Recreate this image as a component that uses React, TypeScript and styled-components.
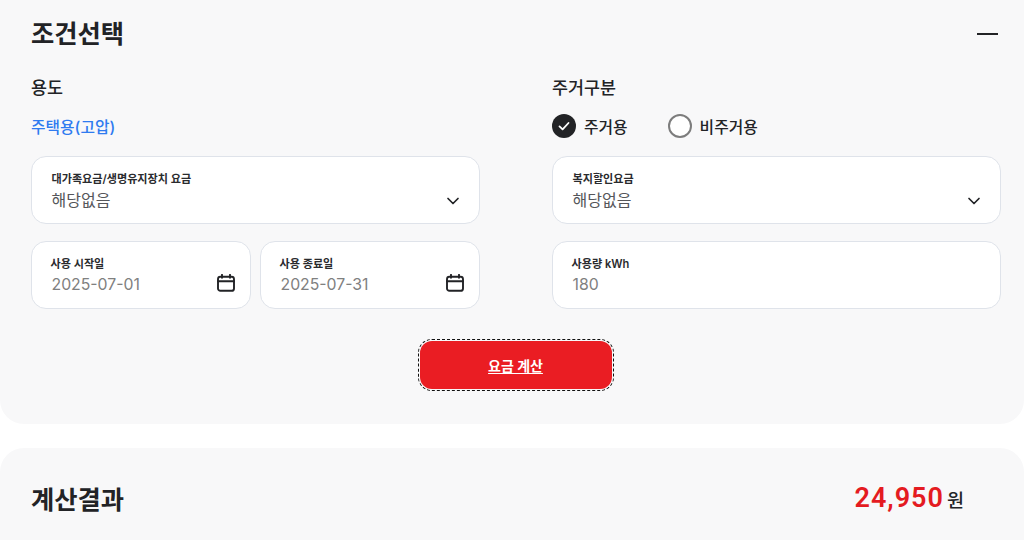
import React from 'react';
import styled, { createGlobalStyle } from 'styled-components';

const GlobalStyle = createGlobalStyle`
  html, body {
    margin: 0;
    padding: 0;
    background: #fff;
    overflow: hidden;
  }
  body {
    font-family: Inter, "Noto Sans CJK KR", sans-serif;
    color: #222326;
  }
`;

const Page = styled.div`
  width: 1024px;
  height: 540px;
  overflow: hidden;
`;

const ConditionPanel = styled.section`
  background: #f8f8f9;
  height: 424px;
  box-sizing: border-box;
  padding: 16px 24px 0 31px;
  border-radius: 0 0 24px 24px;
`;

const PanelHead = styled.div`
  display: flex;
  align-items: center;
  justify-content: space-between;
  height: 36px;
`;

const PanelTitle = styled.h2`
  margin: 0;
  font-size: 25.3px;
  line-height: 36px;
  font-weight: 700;
  color: #222326;
`;

const CollapseBar = styled.span`
  display: block;
  width: 21px;
  height: 2px;
  margin-right: 2px;
  background: #222326;
`;

const Columns = styled.div`
  display: grid;
  grid-template-columns: 449px 449px;
  column-gap: 72px;
  margin-top: 24px;
`;

const Column = styled.div`
  display: flex;
  flex-direction: column;
`;

const GroupLabel = styled.div`
  font-size: 17.4px;
  line-height: 24px;
  font-weight: 500;
  color: #222326;
`;

const ValueRow = styled.div`
  display: flex;
  align-items: center;
  height: 28px;
  margin: 12px 0 16px;
`;

const UsageLink = styled.span`
  font-size: 15.8px;
  font-weight: 500;
  color: #2f7bf0;
`;

const RadioOption = styled.label`
  display: flex;
  align-items: center;
  gap: 8px;
  margin-right: 40px;
  font-size: 15.8px;
  font-weight: 500;
  color: #222326;
`;

const RadioMark = styled.span<{ $checked?: boolean }>`
  box-sizing: border-box;
  width: 24px;
  height: 24px;
  border-radius: 50%;
  display: flex;
  align-items: center;
  justify-content: center;
  background: ${(p) => (p.$checked ? '#222326' : '#fff')};
  border: ${(p) => (p.$checked ? 'none' : '2px solid #7d7d7d')};
`;

const FieldStack = styled.div`
  display: flex;
  flex-direction: column;
  gap: 17px;
`;

const FieldRow = styled.div`
  display: grid;
  grid-template-columns: 1fr 1fr;
  gap: 9px;
`;

const FieldBox = styled.div<{ $inset?: number }>`
  box-sizing: border-box;
  height: 68px;
  background: #fff;
  border: 1.5px solid #dfe3ea;
  border-radius: 15px;
  padding: 13.5px 17.5px 0 ${(p) => (p.$inset ?? 18) + 0.5}px;
  display: flex;
  align-items: flex-end;
  justify-content: space-between;
`;

const FieldText = styled.div`
  align-self: flex-start;
  display: flex;
  flex-direction: column;
`;

const FieldLabel = styled.span`
  font-size: 11.1px;
  line-height: 16px;
  font-weight: 600;
  color: #2a2b2e;
`;

const FieldValue = styled.span<{ $muted?: boolean }>`
  margin-top: 2px;
  margin-left: ${(p) => (p.$muted ? '1px' : '0')};
  font-size: ${(p) => (p.$muted ? '15.8px' : '16px')};
  line-height: 22px;
  font-weight: 400;
  color: ${(p) => (p.$muted ? '#808080' : '#55565a')};
`;

const IconSlot = styled.span<{ $top: number; $right: number }>`
  display: flex;
  align-self: flex-start;
  margin-top: ${(p) => p.$top}px;
  margin-right: ${(p) => p.$right}px;
`;

const ActionRow = styled.div`
  display: flex;
  justify-content: center;
  margin-top: 32px;
`;

const CalcButton = styled.button`
  width: 192px;
  height: 48px;
  border: none;
  border-radius: 12px;
  background: #ea1d23;
  color: #fff;
  font-family: inherit;
  font-size: 14px;
  font-weight: 700;
  text-decoration: underline;
  text-underline-offset: 2px;
  outline: 1.5px dashed #111;
  outline-offset: 1.5px;
`;

const ResultPanel = styled.section`
  margin-top: 24px;
  background: #f8f8f9;
  height: 120px;
  box-sizing: border-box;
  padding: 34px 60px 0 31px;
  border-radius: 24px 24px 0 0;
  display: flex;
  justify-content: space-between;
`;

const ResultTotal = styled.div`
  display: flex;
  align-items: baseline;
  gap: 3px;
  height: 36px;
  margin-top: -2px;
`;

const ResultAmount = styled.span`
  font-family: Roboto, sans-serif;
  font-size: 27px;
  line-height: 36px;
  font-weight: 600;
  letter-spacing: 1px;
  color: #e41b21;
`;

const ResultUnit = styled.span`
  font-size: 18.5px;
  font-weight: 500;
  color: #222326;
`;

const Chevron = () => (
  <svg width="16" height="16" viewBox="0 0 16 16" fill="none">
    <path d="M3 5.5 8 10.5 13 5.5" stroke="#222326" strokeWidth="1.7" strokeLinecap="round" strokeLinejoin="round" />
  </svg>
);

const CalendarIcon = () => (
  <svg width="18" height="18" viewBox="0 0 18 18" fill="none" stroke="#222326" strokeWidth="1.9">
    <rect x="1" y="2.8" width="16" height="14" rx="2.4" />
    <path d="M1 7.2h16M5 .8v3M13 .8v3" strokeLinecap="round" />
  </svg>
);

const CheckIcon = () => (
  <svg width="14" height="14" viewBox="0 0 14 14" fill="none">
    <path d="M2.5 7.4 5.6 10.4 11.5 4" stroke="#fff" strokeWidth="1.8" strokeLinecap="round" strokeLinejoin="round" />
  </svg>
);

const App: React.FC = () => {
  return (
    <Page>
      <GlobalStyle />
      <ConditionPanel>
        <PanelHead>
          <PanelTitle>조건선택</PanelTitle>
          <CollapseBar />
        </PanelHead>
        <Columns>
          <Column>
            <GroupLabel>용도</GroupLabel>
            <ValueRow>
              <UsageLink>주택용(고압)</UsageLink>
            </ValueRow>
            <FieldStack>
              <FieldBox $inset={19}>
                <FieldText>
                  <FieldLabel>대가족요금/생명유지장치 요금</FieldLabel>
                  <FieldValue>해당없음</FieldValue>
                </FieldText>
                <IconSlot $top={22} $right={1}><Chevron /></IconSlot>
              </FieldBox>
              <FieldRow>
                <FieldBox>
                  <FieldText>
                    <FieldLabel>사용 시작일</FieldLabel>
                    <FieldValue $muted>2025-07-01</FieldValue>
                  </FieldText>
                  <IconSlot $top={18} $right={-2}><CalendarIcon /></IconSlot>
                </FieldBox>
                <FieldBox>
                  <FieldText>
                    <FieldLabel>사용 종료일</FieldLabel>
                    <FieldValue $muted>2025-07-31</FieldValue>
                  </FieldText>
                  <IconSlot $top={18} $right={-2}><CalendarIcon /></IconSlot>
                </FieldBox>
              </FieldRow>
            </FieldStack>
          </Column>
          <Column>
            <GroupLabel>주거구분</GroupLabel>
            <ValueRow>
              <RadioOption>
                <RadioMark $checked><CheckIcon /></RadioMark>
                주거용
              </RadioOption>
              <RadioOption>
                <RadioMark />
                비주거용
              </RadioOption>
            </ValueRow>
            <FieldStack>
              <FieldBox $inset={19}>
                <FieldText>
                  <FieldLabel>복지할인요금</FieldLabel>
                  <FieldValue>해당없음</FieldValue>
                </FieldText>
                <IconSlot $top={22} $right={1}><Chevron /></IconSlot>
              </FieldBox>
              <FieldBox>
                <FieldText>
                  <FieldLabel>사용량 kWh</FieldLabel>
                  <FieldValue $muted>180</FieldValue>
                </FieldText>
              </FieldBox>
            </FieldStack>
          </Column>
        </Columns>
        <ActionRow>
          <CalcButton>요금 계산</CalcButton>
        </ActionRow>
      </ConditionPanel>
      <ResultPanel>
        <PanelTitle>계산결과</PanelTitle>
        <ResultTotal>
          <ResultAmount>24,950</ResultAmount>
          <ResultUnit>원</ResultUnit>
        </ResultTotal>
      </ResultPanel>
    </Page>
  );
};

export default App;
